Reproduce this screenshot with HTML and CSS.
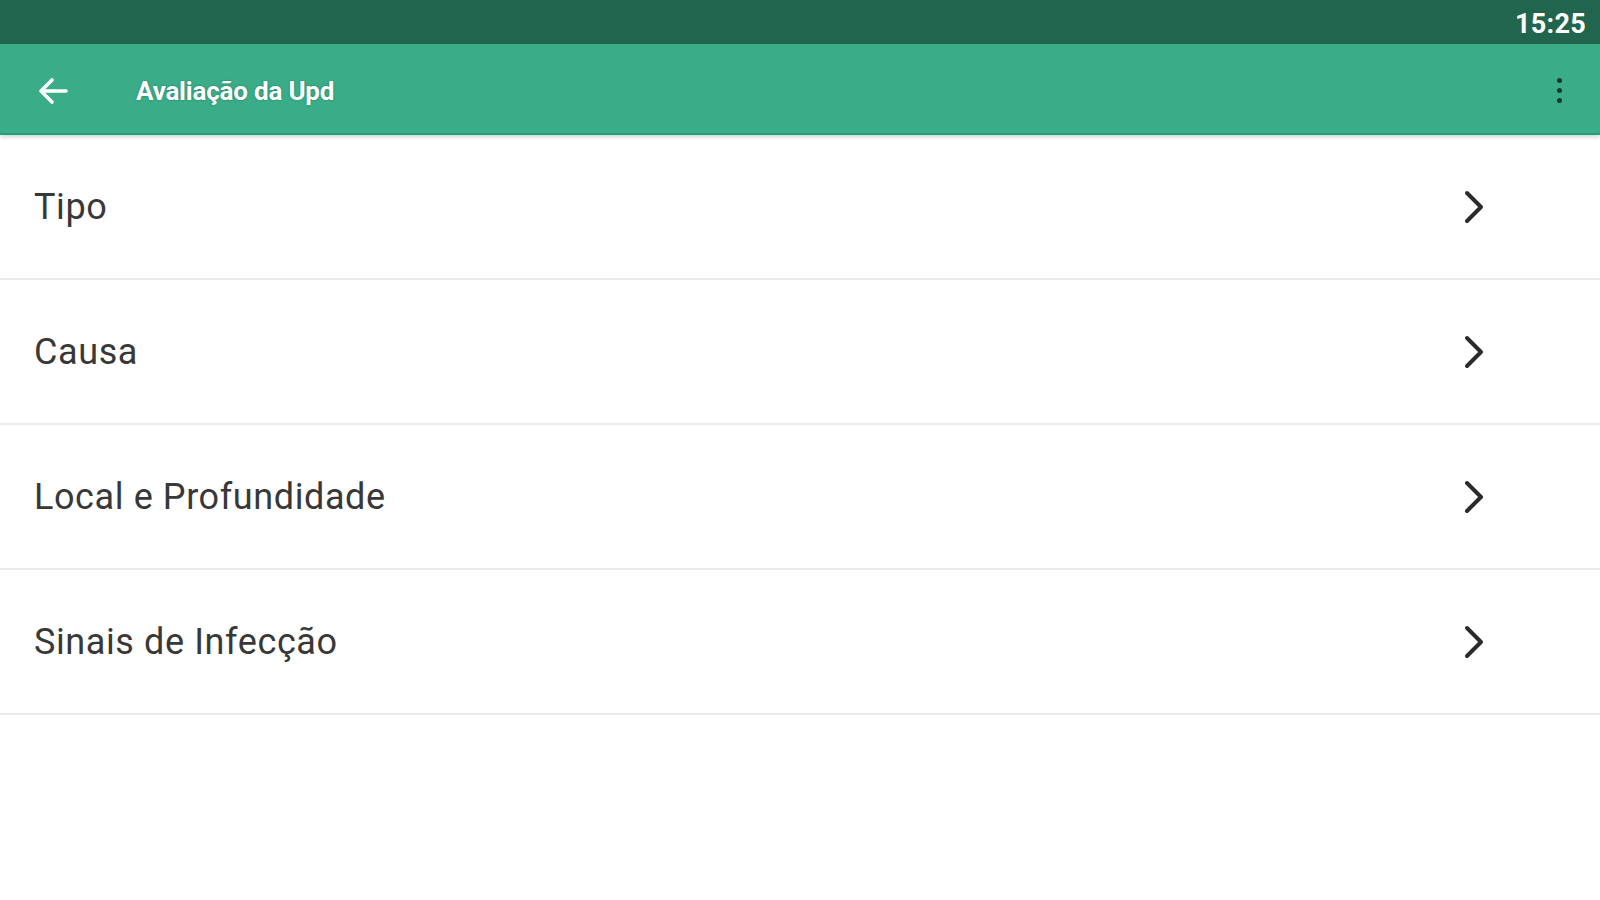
FILE: index.html
```html
<!DOCTYPE html>
<html lang="pt">
<head>
<meta charset="utf-8">
<title>Avaliação da Upd</title>
<link rel="stylesheet" href="styles.css">
</head>
<body>
<div class="status-bar"><span class="time">15:25</span></div>
<header class="app-bar">
  <svg class="back" width="32" height="32" viewBox="0 0 32 32" aria-hidden="true">
    <path d="M29 16H4M15 5L4 16l11 11" fill="none" stroke="#fff" stroke-width="3.6" stroke-linecap="round" stroke-linejoin="round"/>
  </svg>
  <h1 class="title">Avaliação da Upd</h1>
  <div class="menu"><span></span><span></span><span></span></div>
</header>
<main class="list">
  <div class="row"><span class="label">Tipo</span><svg class="chev" width="20" height="34" viewBox="0 0 20 34"><path d="M3 3l14 14L3 31" fill="none" stroke="#2b2b2b" stroke-width="4" stroke-linecap="round" stroke-linejoin="round"/></svg></div>
  <div class="row"><span class="label">Causa</span><svg class="chev" width="20" height="34" viewBox="0 0 20 34"><path d="M3 3l14 14L3 31" fill="none" stroke="#2b2b2b" stroke-width="4" stroke-linecap="round" stroke-linejoin="round"/></svg></div>
  <div class="row"><span class="label">Local e Profundidade</span><svg class="chev" width="20" height="34" viewBox="0 0 20 34"><path d="M3 3l14 14L3 31" fill="none" stroke="#2b2b2b" stroke-width="4" stroke-linecap="round" stroke-linejoin="round"/></svg></div>
  <div class="row"><span class="label">Sinais de Infecção</span><svg class="chev" width="20" height="34" viewBox="0 0 20 34"><path d="M3 3l14 14L3 31" fill="none" stroke="#2b2b2b" stroke-width="4" stroke-linecap="round" stroke-linejoin="round"/></svg></div>
</main>
</body>
</html>
```
FILE: styles.css
```css
html, body {
  margin: 0;
  padding: 0;
  background: #fff;
  font-family: Roboto, "Liberation Sans", sans-serif;
}
.status-bar {
  height: 44px;
  box-sizing: border-box;
  padding: 4px 14px 0 0;
  background: #22654f;
  display: flex;
  justify-content: flex-end;
  align-items: center;
}
.time {
  color: #fff;
  font-weight: 700;
  font-size: 27px;
  letter-spacing: 0.3px;
}
.app-bar {
  height: 89px;
  box-sizing: border-box;
  background: #3aad88;
  border-bottom: 2px solid #1fa077;
  display: flex;
  align-items: center;
  padding: 4px 38px 0 37px;
  box-shadow: 0 2px 4px rgba(0,0,0,0.18);
  position: relative;
  z-index: 1;
}
.app-bar {
  height: 91px;
}
.back {
  flex: none;
}
.title {
  margin: 0 0 0 67px;
  font-size: 26px;
  font-weight: 700;
  color: #fff;
  letter-spacing: -0.2px;
  flex: 1;
  text-shadow: 0 0 2px rgba(0,60,40,0.5);
}
.menu {
  display: flex;
  flex-direction: column;
  gap: 5px;
  align-items: center;
}
.menu span {
  width: 5px;
  height: 5px;
  border-radius: 50%;
  background: #17392d;
}
.row {
  height: 143px;
  border-bottom: 2px solid #ebebeb;
  display: flex;
  align-items: center;
  justify-content: space-between;
  padding: 0 116px 0 34px;
}
.label {
  font-size: 36px;
  color: #383838;
  letter-spacing: 0.6px;
}
.chev {
  flex: none;
}
```
